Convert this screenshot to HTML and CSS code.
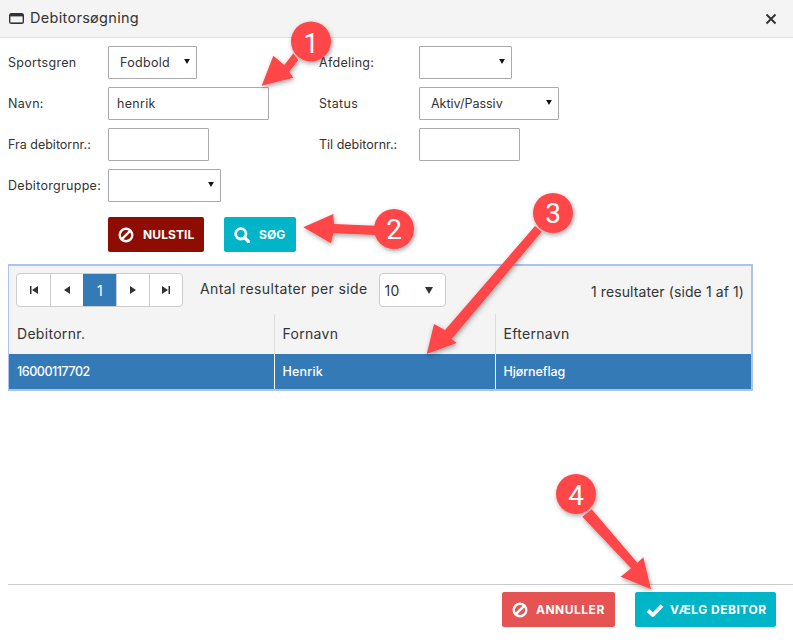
FILE: index.html
```html
<!DOCTYPE html>
<html lang="da">
<head>
<meta charset="utf-8">
<title>Debitorsøgning</title>
<link rel="stylesheet" href="styles.css">
</head>
<body>
<div class="dialog">
  <header class="titlebar">
    <svg class="title-icon" viewBox="0 0 15 11"><rect width="15" height="11" rx="2.500" fill="#333"/><rect x="1.400" y="3.400" width="12.200" height="6" fill="#f4f4f4"/></svg>
    <span class="title">Debitorsøgning</span>
    <svg class="close" viewBox="0 0 12 12"><path d="M1.500 1.500l9 9M10.500 1.500l-9 9" stroke="#333" stroke-width="2" fill="none"/></svg>
  </header>

  <form class="form">
    <label>Sportsgren</label>
    <div class="select w89"><select class="pad-wide"><option>Fodbold</option></select><svg class="caret" viewBox="0 0 8 7"><path d="M0 0h8L4 7z"/></svg></div>
    <label>Afdeling:</label>
    <div class="select w93"><select></select><svg class="caret" viewBox="0 0 8 7"><path d="M0 0h8L4 7z"/></svg></div>

    <label>Navn:</label>
    <input class="field w161" value="henrik">
    <label>Status</label>
    <div class="select w140"><select class="pad-wide"><option>Aktiv/Passiv</option></select><svg class="caret" viewBox="0 0 8 7"><path d="M0 0h8L4 7z"/></svg></div>

    <label class="tight">Fra debitornr.:</label>
    <input class="field w101">
    <label class="tight">Til debitornr.:</label>
    <input class="field w101">

    <label>Debitorgruppe:</label>
    <div class="select w113"><select></select><svg class="caret" viewBox="0 0 8 7"><path d="M0 0h8L4 7z"/></svg></div>
  </form>

  <div class="actions">
    <button class="btn btn-dark" type="button">
      <svg class="ico" viewBox="0 0 16 16"><circle cx="8" cy="8" r="6.300" fill="none" stroke="#fff" stroke-width="2.400"/><path d="M3.800 12.200l8.400-8.400" stroke="#fff" stroke-width="2.400"/></svg>
      NULSTIL
    </button>
    <button class="btn btn-teal btn-sog" type="button">
      <svg class="ico" viewBox="0 0 16 16"><circle cx="6.800" cy="6.800" r="5.200" fill="none" stroke="#fff" stroke-width="2.800"/><path d="M10.500 10.500l4.300 4.300" stroke="#fff" stroke-width="3.200" stroke-linecap="round"/></svg>
      SØG
    </button>
  </div>

  <section class="results">
    <div class="toolbar">
      <div class="pager">
        <span class="page"><svg viewBox="0 0 8 8"><path d="M0 0h1.500v8H0zM8 0v8L2 4z"/></svg></span>
        <span class="page"><svg viewBox="0 0 8 8"><path d="M7 0v8L1 4z"/></svg></span>
        <span class="page current">1</span>
        <span class="page"><svg viewBox="0 0 8 8"><path d="M1 0v8l6-4z"/></svg></span>
        <span class="page"><svg viewBox="0 0 8 8"><path d="M8 0H6.500v8H8zM0 0v8l6-4z"/></svg></span>
      </div>
      <span class="perpage-label">Antal resultater per side</span>
      <div class="perpage"><span>10</span><svg class="caret-lg" viewBox="0 0 8 7"><path d="M0 0h8L4 7z"/></svg></div>
      <span class="count">1 resultater (side 1 af 1)</span>
    </div>
    <table class="grid">
      <colgroup><col class="c1"><col class="c2"><col class="c3"></colgroup>
      <thead><tr><th>Debitornr.</th><th>Fornavn</th><th>Efternavn</th></tr></thead>
      <tbody><tr><td class="digits">16000117702</td><td>Henrik</td><td class="lastname">Hjørneflag</td></tr></tbody>
    </table>
  </section>

  <footer class="footer">
    <button class="btn btn-red" type="button">
      <svg class="ico" viewBox="0 0 16 16"><circle cx="8" cy="8" r="6.300" fill="none" stroke="#fff" stroke-width="2.400"/><path d="M3.800 12.200l8.400-8.400" stroke="#fff" stroke-width="2.400"/></svg>
      ANNULLER
    </button>
    <button class="btn btn-teal btn-vaelg" type="button">
      <svg class="ico ico-check" viewBox="0 0 18 14"><path d="M2 7.500l4.800 4.500L16 2.500" fill="none" stroke="#fff" stroke-width="3.800"/></svg>
      VÆLG DEBITOR
    </button>
  </footer>

  <svg class="callouts" viewBox="0 0 793 643">
    <defs>
      <filter id="sh" x="-30%" y="-30%" width="160%" height="160%"><feDropShadow dx="1" dy="2" stdDeviation="2.500" flood-color="#000" flood-opacity=".35"/></filter>
    </defs>
    <g filter="url(#sh)" fill="#ff4648">
      <path d="M261.700 85.700L273.300 55.700 284.300 65 293.300 53.300 298.300 60 289.300 71.700 293.300 77.700z"/>
      <circle cx="311" cy="41.500" r="20"/>
    </g>
    <g filter="url(#sh)" fill="#ff4648">
      <path d="M303.300 227.300L333.300 214 334 224 376 225.700 376 235 333.300 233.300 331 243.300z"/>
      <circle cx="394" cy="229" r="20"/>
    </g>
    <g filter="url(#sh)" fill="#ff4648">
      <path d="M426.700 354L434 324 445 330 535 226 541.700 231.700 451.700 339 456.700 343z"/>
      <circle cx="553" cy="213" r="20"/>
    </g>
    <g filter="url(#sh)" fill="#ff4648">
      <path d="M651 589.300L620.700 576.700 631 568.300 582.300 516.700 591.700 509.300 637.300 562.700 643.300 557.300z"/>
      <circle cx="576" cy="494" r="20"/>
    </g>
    <g class="num">
      <text x="311" y="53">1</text>
      <text x="394" y="239">2</text>
      <text x="553" y="223">3</text>
      <text x="576" y="504.500">4</text>
    </g>
  </svg>
</div>
</body>
</html>
```

FILE: styles.css
```css
* { box-sizing: border-box; }
html, body { margin: 0; padding: 0; background: #fff; }
body {
  font-family: Inter, "Open Sans", "Liberation Sans", sans-serif;
  font-size: 13px;
  letter-spacing: .25px;
  color: #333;
}
.dialog {
  position: relative;
  width: 793px;
  height: 643px;
  display: flex;
  flex-direction: column;
  overflow: hidden;
}
.titlebar {
  flex: none;
  height: 38px;
  display: flex;
  align-items: center;
  padding: 0 16px 0 9px;
  background: #f4f4f4;
  border-bottom: 1px solid #e0e0e0;
}
.title-icon { width: 15px; height: 11px; margin-right: 6px; }
.title { font-size: 14.500px; flex: 1; letter-spacing: .3px; padding-bottom: 2px; }
.close { width: 12px; height: 12px; }

.form {
  margin-top: 8px;
  padding-left: 8px;
  display: grid;
  grid-template-columns: 100px 211px 100px 1fr;
  grid-auto-rows: 33px;
  row-gap: 8px;
  align-items: center;
}
.form label { white-space: nowrap; font-size: 12.500px; letter-spacing: .3px; }
.form label.tight { letter-spacing: 0; }
.select { position: relative; height: 33px; }
.select select {
  appearance: none;
  width: 100%;
  height: 100%;
  padding: 0 8px;
  border: 1px solid #aaa;
  border-radius: 1px;
  background: #fff;
  font: inherit;
  font-size: 12.500px;
  letter-spacing: .3px;
  color: #333;
}
.select select.pad-wide { padding-left: 11px; }
.w140 select { letter-spacing: 0; }
.caret { position: absolute; right: 7px; top: 13px; width: 6px; height: 5px; fill: #111; pointer-events: none; }
.field {
  height: 33px;
  padding: 0 8px;
  border: 1px solid #aaa;
  border-radius: 1px;
  font: inherit;
  font-size: 12.500px;
  letter-spacing: .3px;
  color: #333;
  background: #fff;
}
.w89 { width: 89px; }
.w93 { width: 93px; }
.w101 { width: 101px; }
.w113 { width: 113px; }
.w140 { width: 140px; }
.w161 { width: 161px; }

.actions {
  flex: none;
  margin-top: 15px;
  padding-left: 108px;
  display: flex;
  gap: 20px;
}
.btn {
  display: inline-flex;
  align-items: center;
  height: 35px;
  padding: 0;
  border: 0;
  border-radius: 2px;
  color: #fff;
  font: inherit;
  font-size: 12px;
  font-weight: 700;
  letter-spacing: .1px;
  white-space: nowrap;
}
.ico { width: 16px; height: 16px; flex: none; margin-right: 9px; }
.ico-check { width: 18px; height: 14px; margin-right: 6px; }
.btn-dark { width: 96px; padding-left: 10px; background: #8f0c00; }
.btn-teal { background: #00b5c8; }
.btn-sog { width: 72px; padding-left: 10px; }
.btn-red { width: 113px; padding-left: 10px; background: #e55353; letter-spacing: .5px; }
.btn-red .ico { margin-right: 8px; }
.btn-vaelg { width: 141px; padding-left: 11px; letter-spacing: .5px; }

.results {
  flex: none;
  width: 745px;
  margin: 12px 0 0 8px;
  border: 2px solid #a9c4f2;
  border-left-width: 1px;
  background: #f4f4f4;
}
.toolbar {
  height: 48px;
  display: flex;
  align-items: flex-start;
  padding: 7px 7px 0 7px;
}
.pager {
  display: flex;
  height: 34px;
  border: 1px solid #ccc;
  border-radius: 4px;
  overflow: hidden;
  background: #fff;
}
.page {
  width: 33px;
  display: flex;
  align-items: center;
  justify-content: center;
  border-left: 1px solid #ccc;
}
.page:first-child { border-left: 0; }
.page svg { width: 8px; height: 8px; fill: #333; }
.page.current { background: #337ab7; border-color: #337ab7; color: #fff; font-size: 14px; }
.perpage-label { margin: 7px 0 0 17px; font-size: 14px; letter-spacing: .38px; white-space: nowrap; }
.perpage {
  width: 67px;
  height: 34px;
  margin-left: 11px;
  padding: 0 5px;
  display: flex;
  align-items: center;
  justify-content: space-between;
  border: 1px solid #ccc;
  border-radius: 4px;
  background: #fff;
  font-size: 14px;
}
.caret-lg { width: 8px; height: 7px; margin-right: 7px; fill: #333; }
.count { margin: 10px 0 0 auto; font-size: 14px; letter-spacing: .1px; white-space: nowrap; }

.grid { width: 100%; table-layout: fixed; border-collapse: collapse; }
.c1 { width: 265px; }
.c2 { width: 221px; }
.grid th {
  height: 40px;
  padding: 0 8px 2px;
  text-align: left;
  font-weight: 400;
  font-size: 14px;
  letter-spacing: .3px;
  border-left: 1px solid #ddd;
}
.grid th:first-child, .grid td:first-child { border-left: 0; }
.grid td {
  height: 35px;
  padding: 0 8px;
  background: #337ab7;
  color: #fff;
  font-size: 12.500px;
  font-weight: 500;
  letter-spacing: .2px;
  border-left: 1px solid #fff;
}
.grid td.digits { letter-spacing: -.45px; }
.grid td.lastname { letter-spacing: -.1px; }

.footer {
  margin-top: auto;
  margin-left: 8px;
  padding: 7px 17px 16px 0;
  display: flex;
  justify-content: flex-end;
  gap: 20px;
  border-top: 1px solid #ccc;
}

.callouts { position: absolute; left: 0; top: 0; width: 793px; height: 643px; pointer-events: none; }
.num text {
  fill: #fff;
  font-family: Roboto, "Liberation Sans", sans-serif;
  font-size: 28px;
  text-anchor: middle;
  letter-spacing: 0;
}
```
